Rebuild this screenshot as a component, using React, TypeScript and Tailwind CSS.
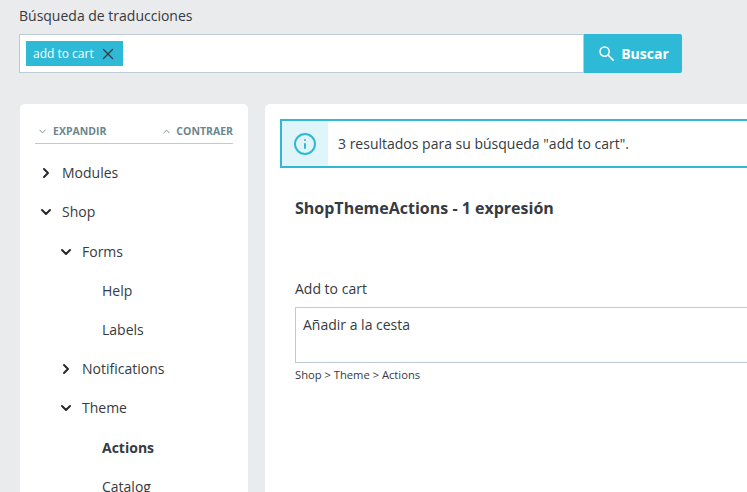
import { X, Info, ChevronRight, ChevronDown, ChevronUp } from "lucide-react";

interface TreeRow {
  label: string;
  depth: 0 | 1 | 2;
  open?: boolean;
  active?: boolean;
}

const rows: TreeRow[] = [
  { label: "Modules", depth: 0, open: false },
  { label: "Shop", depth: 0, open: true },
  { label: "Forms", depth: 1, open: true },
  { label: "Help", depth: 2 },
  { label: "Labels", depth: 2 },
  { label: "Notifications", depth: 1, open: false },
  { label: "Theme", depth: 1, open: true },
  { label: "Actions", depth: 2, active: true },
  { label: "Catalog", depth: 2 },
];

const Row = ({ row }: { row: TreeRow }) => (
  <div
    className={`flex h-[39.2px] shrink-0 items-center ${
      row.depth === 0 ? "pl-[3px]" : row.depth === 1 ? "pl-[23px]" : "pl-[67px]"
    }`}
  >
    {row.open === true && <ChevronDown size={16} strokeWidth={3} className="mr-[8px] shrink-0 text-[#25292e]" />}
    {row.open === false && <ChevronRight size={16} strokeWidth={3} className="mr-[8px] shrink-0 text-[#25292e]" />}
    <span className={row.active ? "font-bold" : ""}>{row.label}</span>
  </div>
);

export default function App() {
  return (
    <div className="h-[492px] w-[747px] overflow-hidden bg-[#e9ebed] font-['Open_Sans',sans-serif] text-sm text-[#363a41]">
      <div className="pl-[19px] pt-[6px]">
        <div className="h-[28px] leading-[20px]">Búsqueda de traducciones</div>
        <div className="flex h-[39px]">
          <div className="flex w-[565px] items-center border border-[#bbcdd2] bg-white pl-[6px]">
            <div className="flex h-[25px] w-[97px] items-center bg-[#2eb9d6] pl-[7px] text-xs text-white">
              add to cart
              <X size={18} strokeWidth={1.7} className="ml-[5px] text-[#363a41]" />
            </div>
          </div>
          <button className="flex w-[98px] items-center justify-center rounded-r-[2px] bg-[#2eb9d6] pl-[2px] font-bold text-white">
            {/* search glass: small lens, long handle */}
            <svg width="15" height="15" viewBox="0 0 15 15" fill="none" stroke="currentColor" strokeWidth="1.5" className="mr-[7px]">
              <circle cx="5.6" cy="5.6" r="4.6" />
              <path d="M9 9l5.4 5.4" strokeLinecap="round" />
            </svg>
            Buscar
          </button>
        </div>
      </div>

      <div className="mt-[31px] flex h-[388px] items-start pl-[20px]">
        <aside className="h-[420px] w-[228px] shrink-0 rounded-[5px] bg-white px-[15px] pt-[18px]">
          <div className="flex h-[22px] items-center justify-between border-b border-[#bbcdd2] pb-[3px] text-[10.5px] font-bold text-[#6c868e]">
            <span className="flex items-center">
              <ChevronDown size={11} strokeWidth={2} className="ml-[2px] mr-[5px]" />
              EXPANDIR
            </span>
            <span className="flex items-center">
              <ChevronUp size={11} strokeWidth={2} className="mr-[4px]" />
              CONTRAER
            </span>
          </div>
          <div className="mt-[9.6px] flex flex-col">
            {rows.map((row) => (
              <Row key={row.label} row={row} />
            ))}
          </div>
        </aside>

        <main className="ml-[17px] h-[420px] w-[520px] shrink-0 rounded-l-[5px] bg-white pl-[15px] pt-[15px]">
          <div className="flex h-[49px] border-y-2 border-l-2 border-[#2eb9d6]">
            <div className="flex w-[46px] items-center justify-center bg-[#dff5f9]">
              <Info size={24} strokeWidth={2} className="text-[#2eb9d6]" />
            </div>
            <div className="flex items-center pl-[10px]">3 resultados para su búsqueda "add to cart".</div>
          </div>
          <div className="pl-[15px]">
            <h2 className="mt-[29px] text-base leading-[22px] font-bold">ShopThemeActions - 1 expresión</h2>
            <div className="mt-[60px] leading-[20px]">Add to cart</div>
            <div className="mt-[8px] h-[56px] border border-[#bbcdd2] px-[7px] py-[7px] leading-[20px]">
              Añadir a la cesta
            </div>
            <div className="mt-[4px] text-[11.2px] leading-[16px]">Shop &gt; Theme &gt; Actions</div>
          </div>
        </main>
      </div>
    </div>
  );
}
